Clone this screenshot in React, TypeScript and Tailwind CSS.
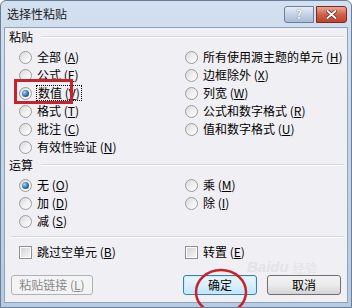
import React from 'react';

function Radio({ checked }: { checked?: boolean }) {
  return (
    <span className="w-[13px] h-[13px] shrink-0 rounded-full border border-[#9c9c9c] bg-gradient-to-br from-[#d9d9d9] via-[#efefef] to-[#ffffff] flex items-center justify-center">
      {checked && (
        <span className="w-[7px] h-[7px] rounded-full bg-[radial-gradient(circle_at_35%_35%,#a9d6f5,#2a6fa6_55%,#163f66)]" />
      )}
    </span>
  );
}

function Check() {
  return (
    <span className="w-[13px] h-[13px] shrink-0 border border-[#8e8f8f] bg-white p-[1px]">
      <span className="block w-full h-full bg-gradient-to-br from-[#d4d4d4] to-[#f6f6f6]" />
    </span>
  );
}

type Item = { label: string; k: string; checked?: boolean; focus?: boolean };

function Opt({ label, k, checked, focus }: Item) {
  return (
    <div className="h-[18px] flex items-center">
      <Radio checked={checked} />
      <span
        className={
          focus
            ? 'ml-[5px] leading-[14px] px-[1px] outline outline-1 outline-dotted outline-black'
            : 'ml-[5px] leading-[14px]'
        }
      >
        {label} (<span className="underline">{k}</span>)
      </span>
    </div>
  );
}

function GroupHead({ title }: { title: string }) {
  return (
    <div className="h-[18px] flex items-center pl-[4px] pr-[3px]">
      <span className="leading-[14px]">{title}</span>
      <div className="flex-1 ml-[8px] border-t border-t-[#d5d8dc] border-b border-b-white" />
    </div>
  );
}

const pasteLeft: Item[] = [
  { label: '全部', k: 'A' },
  { label: '公式', k: 'F' },
  { label: '数值', k: 'V', checked: true, focus: true },
  { label: '格式', k: 'T' },
  { label: '批注', k: 'C' },
  { label: '有效性验证', k: 'N' },
];

const pasteRight: Item[] = [
  { label: '所有使用源主题的单元', k: 'H' },
  { label: '边框除外', k: 'X' },
  { label: '列宽', k: 'W' },
  { label: '公式和数字格式', k: 'R' },
  { label: '值和数字格式', k: 'U' },
];

const opLeft: Item[] = [
  { label: '无', k: 'O', checked: true },
  { label: '加', k: 'D' },
  { label: '减', k: 'S' },
];

const opRight: Item[] = [
  { label: '乘', k: 'M' },
  { label: '除', k: 'I' },
];

export default function App() {
  return (
    <div className="relative w-[352px] h-[308px] overflow-hidden rounded-t-[6px] border border-[#6b7f99] bg-gradient-to-b from-[#d3e0ef] via-[#c3d4e8] to-[#b6cae2] font-['Noto_Sans_CJK_SC','Noto_Sans',sans-serif] text-[12px] text-black">
      {/* title bar */}
      <div className="h-[26px] flex items-center pl-[6px] pr-[4px]">
        <span className="text-[12px] leading-[14px] text-[#1a1a1a]">选择性粘贴</span>
        <div className="flex-1" />
        <div className="w-[30px] h-[17px] rounded-l-[3px] border border-[#6d7f96] bg-gradient-to-b from-[#e4ecf5] via-[#c4d3e4] to-[#a9bdd5] flex items-center justify-center text-[12px] font-bold text-white [text-shadow:0_0_1px_#44546a]">
          ?
        </div>
        <div className="w-[31px] h-[17px] ml-[2px] rounded-r-[3px] border border-[#7a2a22] bg-gradient-to-b from-[#e8a796] via-[#d0604a] to-[#c0432e] flex items-center justify-center">
          <svg width="11" height="9" viewBox="0 0 11 9">
            <path d="M1.5 1 L9.5 8 M9.5 1 L1.5 8" stroke="#4a1a12" strokeWidth="3.2" strokeLinecap="round" />
            <path d="M1.5 1 L9.5 8 M9.5 1 L1.5 8" stroke="#ffffff" strokeWidth="2" strokeLinecap="round" />
          </svg>
        </div>
      </div>

      {/* client area */}
      <div className="mx-[3px] h-[276px] border border-[#8fa3bb] bg-[#f0eff3]">
        <GroupHead title="粘贴" />
        <div className="grid grid-cols-[166px_1fr] pl-[14px] mt-[2px]">
          <div>
            {pasteLeft.map((o) => (
              <Opt key={o.k} {...o} />
            ))}
          </div>
          <div>
            {pasteRight.map((o) => (
              <Opt key={o.k} {...o} />
            ))}
          </div>
        </div>

        <GroupHead title="运算" />
        <div className="grid grid-cols-[166px_1fr] pl-[14px] mt-[2px]">
          <div>
            {opLeft.map((o) => (
              <Opt key={o.k} {...o} />
            ))}
          </div>
          <div>
            {opRight.map((o) => (
              <Opt key={o.k} {...o} />
            ))}
          </div>
        </div>

        <div className="mt-[6px] ml-[6px] mr-[3px] border-t border-t-[#d5d8dc] border-b border-b-white" />

        <div className="grid grid-cols-[166px_1fr] pl-[14px] mt-[5px]">
          <div className="h-[18px] flex items-center">
            <Check />
            <span className="ml-[5px] leading-[14px]">
              跳过空单元 (<span className="underline">B</span>)
            </span>
          </div>
          <div className="h-[18px] flex items-center">
            <Check />
            <span className="ml-[5px] leading-[14px]">
              转置 (<span className="underline">E</span>)
            </span>
          </div>
        </div>

        <div className="flex items-center mt-[14px] pl-[6px] pr-[6px]">
          <div className="w-[82px] h-[20px] rounded-[3px] border border-[#adb2b5] bg-[#f4f4f4] flex items-center justify-center text-[#8a8a8a]">
            粘贴链接 (<span className="underline">L</span>)
          </div>
          <div className="flex-1" />
          <div className="w-[74px] h-[20px] rounded-[3px] border border-[#3c7fb1] bg-gradient-to-b from-[#eaf6fd] via-[#d9f0fc] to-[#bee6fd] shadow-[inset_0_0_0_1px_#c9ecfd] flex items-center justify-center">
            确定
          </div>
          <div className="w-[74px] h-[20px] ml-[10px] rounded-[3px] border border-[#707070] bg-gradient-to-b from-[#f2f2f2] via-[#ebebeb] to-[#d4d4d4] flex items-center justify-center">
            取消
          </div>
        </div>
      </div>

      {/* faint watermark */}
      <div className="absolute left-[246px] top-[258px] flex items-end leading-none text-[#e3e3e7]">
        <span className="text-[15px] font-bold italic font-['Liberation_Sans',sans-serif]">Baidu</span>
        <span className="ml-[4px] text-[12px] font-['Noto_Sans_CJK_SC',sans-serif]">经验</span>
      </div>

      {/* annotations */}
      <div className="absolute left-[13px] top-[78px] w-[59px] h-[25px] border-[3px] border-[#c8232b]" />
      <svg className="absolute left-[192px] top-[266px]" width="56" height="50" viewBox="0 0 56 50">
        <ellipse cx="28" cy="25" rx="25" ry="22" fill="none" stroke="#c8232b" strokeWidth="2.5" />
      </svg>
    </div>
  );
}
